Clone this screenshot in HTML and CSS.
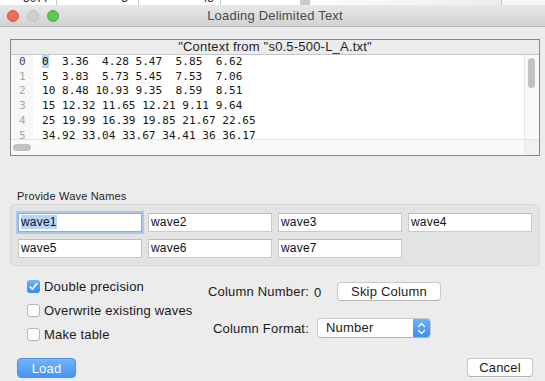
FILE: index.html
```html
<!DOCTYPE html>
<html>
<head>
<meta charset="utf-8">
<title>Loading Delimited Text</title>
<link rel="stylesheet" href="styles.css">
</head>
<body>
<div class="behind">
  <div class="bcell c1"><span>3077</span></div>
  <div class="bcell c2"><span>3</span></div>
  <div class="bcell c3"><span>48</span></div>
  <div class="bcell c4"></div>
  <div class="bscroll"></div>
  <div class="bcell c5"></div>
  <div class="bcell c6"></div>
</div>
<div class="window">
  <div class="titlebar">
    <div class="lights"><span class="light red"></span><span class="light min"></span><span class="light green"></span></div>
    <div class="title">Loading Delimited Text</div>
    <div></div>
  </div>

  <div class="textbox">
    <div class="tb-header">"Context from "s0.5-500-L_A.txt"</div>
    <div class="tb-body">
      <div class="gutter"><div class="cur">0</div><div>1</div><div>2</div><div>3</div><div>4</div><div>5</div></div>
      <pre class="code"><span class="hl">0</span>  3.36  4.28 5.47  5.85  6.62
5  3.83  5.73 5.45  7.53  7.06
10 8.48 10.93 9.35  8.59  8.51
15 12.32 11.65 12.21 9.11 9.64
25 19.99 16.39 19.85 21.67 22.65
34.92 33.04 33.67 34.41 36 36.17</pre>
      <div class="vscroll"><div class="vthumb"></div></div>
    </div>
    <div class="hscroll-row">
      <div class="hscroll"><div class="hthumb"></div></div>
      <div class="corner"></div>
    </div>
  </div>

  <div class="section-label">Provide Wave Names</div>
  <div class="group">
    <div class="field focus"><span class="sel">wave1</span></div>
    <div class="field">wave2</div>
    <div class="field">wave3</div>
    <div class="field">wave4</div>
    <div class="field">wave5</div>
    <div class="field">wave6</div>
    <div class="field">wave7</div>
  </div>

  <div class="options">
    <div class="checks">
      <div class="check-row"><span class="cbox checked"><svg width="13" height="13" viewBox="0 0 13 13"><path d="M3.2 6.8 L5.4 9.2 L9.8 3.4" fill="none" stroke="#fff" stroke-width="1.7" stroke-linecap="round" stroke-linejoin="round"/></svg></span><span>Double precision</span></div>
      <div class="check-row"><span class="cbox"></span><span>Overwrite existing waves</span></div>
      <div class="check-row"><span class="cbox"></span><span>Make table</span></div>
    </div>
    <div class="right">
      <div class="frow">
        <span class="flabel">Column Number:</span>
        <span class="value">0</span>
        <span class="btn skip">Skip Column</span>
      </div>
      <div class="frow">
        <span class="flabel">Column Format:</span>
        <span class="popup"><span class="popup-text">Number</span><span class="stepper"><svg width="17" height="19" viewBox="0 0 17 19"><path d="M5.5 7.5 L8.5 4.5 L11.5 7.5" fill="none" stroke="#fff" stroke-width="1.3" stroke-linecap="round" stroke-linejoin="round"/><path d="M5.5 11.5 L8.5 14.5 L11.5 11.5" fill="none" stroke="#fff" stroke-width="1.3" stroke-linecap="round" stroke-linejoin="round"/></svg></span></span>
      </div>
    </div>
  </div>

  <div class="actions">
    <span class="btn primary">Load</span>
    <span class="btn cancel">Cancel</span>
  </div>
</div>
</body>
</html>
```

FILE: styles.css
```css
html, body {
  margin: 0;
  padding: 0;
}
body {
  width: 545px;
  height: 381px;
  overflow: hidden;
  background: #ececec;
  font-family: "Liberation Sans", Arial, sans-serif;
  color: #1a1a1a;
}

/* window behind */
.behind {
  display: flex;
  height: 5px;
  overflow: hidden;
  background: #fff;
}
.bcell {
  box-sizing: border-box;
  border-right: 1px solid #c6c6c6;
  font-size: 12px;
  line-height: 12px;
  color: #222;
}
.bcell span {
  display: block;
  margin-top: -8px;
}
.c1 { width: 57px; padding-left: 23px; }
.c2 { width: 82px; text-align: right; padding-right: 10px; }
.c3 { width: 82px; text-align: right; padding-right: 6px; }
.c4 { width: 79px; border-right: none; }
.bscroll { width: 10px; background: #c9c9c9; }
.c5 { width: 192px; background: linear-gradient(90deg, #fdfdfd, #ededed); }
.c6 { flex: 1; border-right: none; background: #f6f6f6; }

/* window */
.window {
  height: 376px;
  background: #ececec;
}
.titlebar {
  height: 21px;
  border-bottom: 1px solid #b8b8b8;
  background: linear-gradient(#e9e8e9, #d3d2d3);
  display: grid;
  grid-template-columns: 1fr auto 1fr;
  align-items: center;
}
.lights {
  display: flex;
  gap: 8px;
  padding-left: 7px;
}
.light {
  width: 12px;
  height: 12px;
  border-radius: 50%;
  box-sizing: border-box;
}
.red { background: #ee6a5f; border: 1px solid #d9564c; }
.min { background: #d1d0d1; border: 1px solid #c1c0c1; }
.green { background: #62c655; border: 1px solid #50ab44; }
.title {
  font-size: 13px;
  letter-spacing: 0.2px;
  color: #4a4a4a;
  padding-left: 5px;
}

/* text preview box */
.textbox {
  margin: 12px 0 0 10px;
  width: 530px;
  box-sizing: border-box;
  border: 1px solid #878787;
  background: #fff;
}
.tb-header {
  height: 14px;
  line-height: 14px;
  border-bottom: 1px solid #c6c6c6;
  background: #ececec;
  text-align: center;
  font-size: 13px;
  letter-spacing: 0.2px;
  color: #1e1e1e;
}
.tb-body {
  display: flex;
  height: 84px;
  overflow: hidden;
}
.gutter {
  width: 22px;
  box-sizing: border-box;
  padding-left: 8px;
  background: #f7f7f7;
  font: 11.1px/14.7px "DejaVu Sans Mono", monospace;
  color: #a8a8a8;
}
.gutter .cur { color: #4a4a4a; }
.code {
  flex: 1;
  margin: 0;
  padding-left: 9px;
  font: 11.1px/14.7px "DejaVu Sans Mono", monospace;
  color: #151515;
  white-space: pre;
  overflow: hidden;
}
.hl { background: #b5d5fd; }
.vscroll {
  width: 15px;
  box-sizing: border-box;
  border-left: 1px solid #e6e6e6;
  background: #fafafa;
  padding: 3px 0 0 3px;
}
.vthumb {
  width: 7px;
  height: 30px;
  border-radius: 4px;
  background: #c2c2c2;
}
.hscroll-row {
  display: flex;
  height: 15px;
  border-top: 1px solid #e4e4e4;
}
.hscroll {
  flex: 1;
  background: #fafafa;
  padding: 4px 0 0 2px;
}
.hthumb {
  width: 18px;
  height: 7px;
  border-radius: 4px;
  background: #c2c2c2;
}
.corner {
  width: 15px;
  box-sizing: border-box;
  border-left: 1px solid #e6e6e6;
  background: #f1f1f1;
}

/* wave names */
.section-label {
  margin: 34px 0 1px 17px;
  font-size: 11px;
  line-height: 13px;
  letter-spacing: 0.2px;
  color: #1e1e1e;
}
.group {
  margin-left: 10px;
  width: 530px;
  box-sizing: border-box;
  border: 1px solid #d8d8d8;
  border-radius: 5px;
  background: #e3e3e3;
  padding: 8px 7px 7px 7px;
  display: grid;
  grid-template-columns: repeat(4, 124px);
  gap: 7px 6px;
}
.field {
  height: 19px;
  box-sizing: border-box;
  border: 1px solid #c9c9c9;
  border-top-color: #bcbcbc;
  background: #fff;
  font-size: 12px;
  line-height: 17px;
  letter-spacing: 0.2px;
  padding-left: 2px;
  color: #111;
}
.field.focus {
  border-color: #86ade4;
  box-shadow: 0 0 0 2px #a9c8f0;
}
.sel { background: #b5d5fd; }

/* options */
.options {
  display: flex;
  margin-top: 8px;
}
.checks {
  width: 200px;
  box-sizing: border-box;
  padding-left: 27px;
}
.check-row {
  display: flex;
  align-items: center;
  gap: 4px;
  height: 24px;
  font-size: 13px;
  letter-spacing: 0.2px;
  color: #1a1a1a;
}
.cbox {
  width: 13px;
  height: 13px;
  box-sizing: border-box;
  border: 1px solid #b4b4b4;
  border-radius: 3px;
  background: #fff;
  display: flex;
}
.cbox.checked {
  border: none;
  background: linear-gradient(#6eb2fa, #3089f6);
}
.right {
  display: flex;
  flex-direction: column;
  gap: 17px;
  padding-top: 7px;
}
.frow {
  display: flex;
  align-items: center;
  height: 20px;
  font-size: 13px;
  letter-spacing: 0.2px;
}
.flabel {
  width: 109px;
  text-align: right;
}
.value {
  margin-left: 5px;
  width: 23px;
  padding-top: 3px;
}
.btn {
  display: flex;
  align-items: center;
  justify-content: center;
  box-sizing: border-box;
  height: 20px;
  border-radius: 4px;
  font-size: 13px;
  letter-spacing: 0.2px;
  background: #fff;
  border: 1px solid #c8c8c8;
  border-bottom-color: #b2b2b2;
  color: #1a1a1a;
}
.skip { width: 104px; height: 19px; }
.popup {
  margin-left: 8px;
  width: 114px;
  height: 20px;
  box-sizing: border-box;
  display: flex;
  border: 1px solid #c8c8c8;
  border-bottom-color: #b2b2b2;
  border-radius: 4px;
  background: #fff;
  overflow: hidden;
}
.popup-text {
  flex: 1;
  padding-left: 8px;
  line-height: 17px;
}
.stepper {
  width: 17px;
  background: linear-gradient(#6bb2fa, #3a8ef6);
  display: flex;
  align-items: center;
}

/* action buttons */
.actions {
  display: flex;
  justify-content: space-between;
  margin: 12px 12px 0 17px;
}
.primary {
  width: 59px;
  color: #fff;
  border: 1px solid #4c91ee;
  background: linear-gradient(#74b5fa, #4593f6);
}
.cancel { width: 66px; height: 19px; }
```
